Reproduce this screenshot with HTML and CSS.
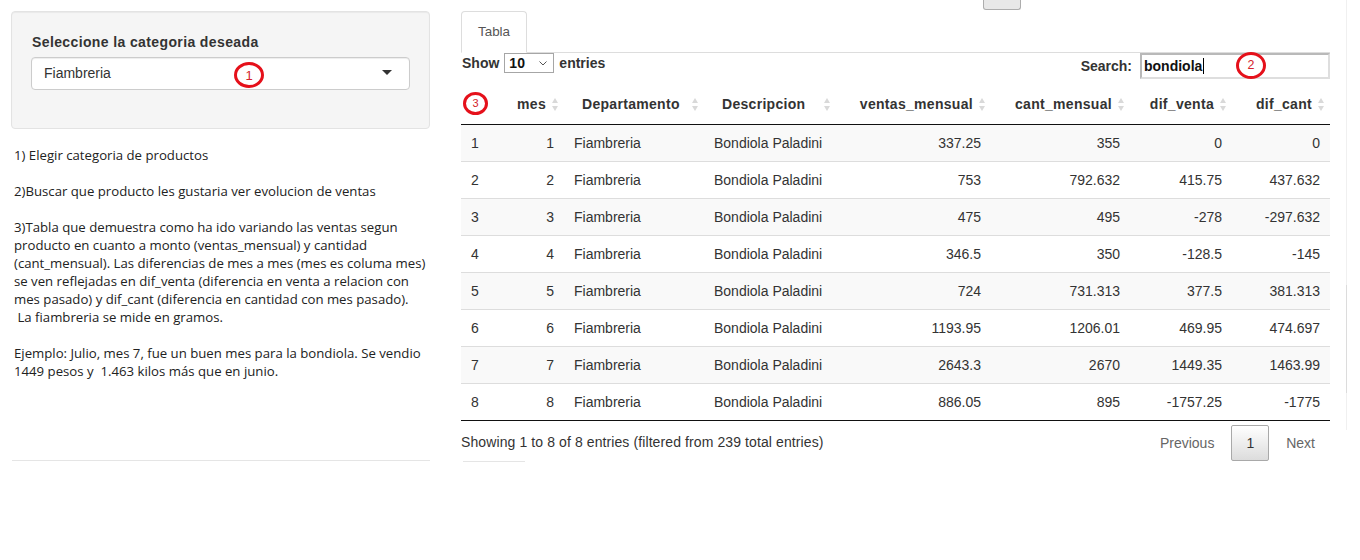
FILE: index.html
```html
<!DOCTYPE html>
<html lang="es">
<head>
<meta charset="utf-8">
<title>Tabla</title>
<link rel="stylesheet" href="styles.css">
</head>
<body>
<div class="page">
  <aside class="sidebar">
    <div class="well">
      <div class="form-group">
        <label class="ctl-label">Seleccione la categoria deseada</label>
        <div class="selectize">
          <span class="sel-value">Fiambreria</span>
          <span class="mark mark-1">1</span>
        </div>
      </div>
    </div>
    <p class="help">1) Elegir categoria de productos<br><br>2)Buscar que producto les gustaria ver evolucion de ventas<br><br>3)Tabla que demuestra como ha ido variando las ventas segun<br>producto en cuanto a monto (ventas_mensual) y cantidad<br>(cant_mensual). Las diferencias de mes a mes (mes es columa mes)<br>se ven reflejadas en dif_venta (diferencia en venta a relacion con<br>mes pasado) y dif_cant (diferencia en cantidad con mes pasado).<br>&nbsp;La fiambreria se mide en gramos.<br><br>Ejemplo: Julio, mes 7, fue un buen mes para la bondiola. Se vendio<br>1449 pesos y&nbsp; 1.463 kilos más que en junio.</p>
    <hr class="rule">
  </aside>

  <main class="main">
    <div class="stub-row"><div class="stub-btn"></div></div>
    <ul class="tabs">
      <li class="tab">Tabla</li>
    </ul>

    <div class="dt-controls">
      <div class="dt-length">
        <span>Show</span>
        <span class="len-select"><span>10</span><svg class="chev" width="8" height="5" viewBox="0 0 8 5"><path d="M0.5 0.5 L4 4 L7.5 0.5" fill="none" stroke="#555" stroke-width="1"/></svg></span>
        <span>entries</span>
      </div>
      <div class="dt-filter">
        <span>Search:</span>
        <span class="search-input">bondiola<span class="caret"></span><span class="mark mark-2">2</span></span>
      </div>
    </div>

    <table class="dt">
      <colgroup>
        <col class="c0"><col class="c1"><col class="c2"><col class="c3"><col class="c4"><col class="c5"><col class="c6"><col class="c7">
      </colgroup>
      <thead>
        <tr>
          <th><span class="mark mark-3">3</span></th>
          <th class="r s">mes</th>
          <th class="s">Departamento</th>
          <th class="s">Descripcion</th>
          <th class="r s">ventas_mensual</th>
          <th class="r s">cant_mensual</th>
          <th class="r s">dif_venta</th>
          <th class="r s">dif_cant</th>
        </tr>
      </thead>
      <tbody>
        <tr><td>1</td><td class="r">1</td><td>Fiambreria</td><td>Bondiola Paladini</td><td class="r">337.25</td><td class="r">355</td><td class="r">0</td><td class="r">0</td></tr>
        <tr><td>2</td><td class="r">2</td><td>Fiambreria</td><td>Bondiola Paladini</td><td class="r">753</td><td class="r">792.632</td><td class="r">415.75</td><td class="r">437.632</td></tr>
        <tr><td>3</td><td class="r">3</td><td>Fiambreria</td><td>Bondiola Paladini</td><td class="r">475</td><td class="r">495</td><td class="r">-278</td><td class="r">-297.632</td></tr>
        <tr><td>4</td><td class="r">4</td><td>Fiambreria</td><td>Bondiola Paladini</td><td class="r">346.5</td><td class="r">350</td><td class="r">-128.5</td><td class="r">-145</td></tr>
        <tr><td>5</td><td class="r">5</td><td>Fiambreria</td><td>Bondiola Paladini</td><td class="r">724</td><td class="r">731.313</td><td class="r">377.5</td><td class="r">381.313</td></tr>
        <tr><td>6</td><td class="r">6</td><td>Fiambreria</td><td>Bondiola Paladini</td><td class="r">1193.95</td><td class="r">1206.01</td><td class="r">469.95</td><td class="r">474.697</td></tr>
        <tr><td>7</td><td class="r">7</td><td>Fiambreria</td><td>Bondiola Paladini</td><td class="r">2643.3</td><td class="r">2670</td><td class="r">1449.35</td><td class="r">1463.99</td></tr>
        <tr><td>8</td><td class="r">8</td><td>Fiambreria</td><td>Bondiola Paladini</td><td class="r">886.05</td><td class="r">895</td><td class="r">-1757.25</td><td class="r">-1775</td></tr>
      </tbody>
    </table>

    <div class="dt-footer">
      <div class="dt-info">Showing 1 to 8 of 8 entries (filtered from 239 total entries)</div>
      <div class="dt-paginate">
        <span class="pg">Previous</span>
        <span class="pg current">1</span>
        <span class="pg">Next</span>
      </div>
    </div>
    <div class="stub-line"></div>
  </main>

  <div class="vline"><div class="vline-thumb"></div></div>
</div>
</body>
</html>
```

FILE: styles.css
```css
html, body {
  margin: 0;
  padding: 0;
  background: #fff;
}

body {
  font-family: "Liberation Sans", Arial, sans-serif;
  font-size: 14px;
  color: #333;
}

.page {
  display: flex;
  align-items: flex-start;
  padding-left: 11px;
}

/* ---------- sidebar ---------- */
.sidebar {
  width: 419px;
  flex: none;
}

.well {
  margin-top: 11px;
  padding: 20px 19px 19px;
  background: #f5f5f5;
  border: 1px solid #e3e3e3;
  border-radius: 4px;
  box-shadow: inset 0 1px 1px rgba(0, 0, 0, 0.05);
}

.form-group {
  margin-bottom: 19px;
}

.ctl-label {
  display: block;
  font-weight: bold;
  line-height: 20px;
  margin-bottom: 5px;
  margin-left: 1px;
  letter-spacing: 0.38px;
}

.selectize {
  position: relative;
  height: 33px;
  box-sizing: border-box;
  border: 1px solid #ccc;
  border-radius: 4px;
  background: #fff;
  padding: 6px 12px;
  line-height: 19px;
  box-shadow: inset 0 1px 1px rgba(0, 0, 0, 0.075);
}

.selectize::after {
  content: "";
  position: absolute;
  right: 17px;
  top: 50%;
  margin-top: -4px;
  border-style: solid;
  border-width: 5px 5px 0;
  border-color: #333 transparent transparent;
}

.help {
  margin: 17px 0 0 3px;
  font-family: "Open Sans", "Noto Sans", sans-serif;
  font-size: 13.2px;
  line-height: 18px;
  color: #222;
  white-space: nowrap;
}

.rule {
  margin: 80px 0 0 1px;
  width: 418px;
  height: 0;
  border: 0;
  border-top: 1px solid #e5e5e5;
}

/* ---------- annotation marks ---------- */
.mark {
  position: absolute;
  box-sizing: border-box;
  border: 3.5px solid #e5101a;
  border-radius: 50%;
  display: flex;
  align-items: center;
  justify-content: center;
  color: #d4232b;
  font-family: "Liberation Sans", Arial, sans-serif;
  font-weight: normal;
  letter-spacing: 0;
  line-height: 1;
}

.mark-1 {
  left: 202px;
  top: 4px;
  width: 30px;
  height: 26px;
  font-size: 13px;
}

.mark-2 {
  left: 94px;
  top: -3px;
  width: 30px;
  height: 27px;
  font-size: 12.5px;
}

.mark-3 {
  left: 2px;
  top: 7px;
  width: 25px;
  height: 23px;
  font-size: 11px;
}

/* ---------- main panel ---------- */
.main {
  width: 869px;
  margin-left: 31px;
  flex: none;
}

.stub-row {
  height: 10px;
  padding-left: 522px;
}

.stub-btn {
  width: 38px;
  height: 10px;
  box-sizing: border-box;
  border: 1px solid #adadad;
  border-top: 0;
  border-radius: 0 0 3px 3px;
  background: #e8e8e8;
}

.tabs {
  list-style: none;
  margin: 1px 0 0;
  padding: 0;
  display: flex;
  border-bottom: 1px solid #ddd;
}

.tab {
  margin-bottom: -1px;
  padding: 10px 16px;
  line-height: 20px;
  font-size: 13.4px;
  color: #555;
  background: #fff;
  border: 1px solid #ddd;
  border-bottom-color: transparent;
  border-radius: 4px 4px 0 0;
}

.dt-controls {
  display: flex;
  justify-content: space-between;
  align-items: flex-start;
  height: 26px;
}

.dt-length {
  display: flex;
  align-items: center;
  font-weight: bold;
  line-height: 20px;
  margin-left: 1px;
}

.len-select {
  display: inline-flex;
  align-items: center;
  justify-content: space-between;
  box-sizing: border-box;
  width: 50px;
  height: 20px;
  margin: 0 5px;
  padding: 0 6px 0 4px;
  border: 1px solid #a6a6a6;
  background: #fff;
  color: #111;
}

.chev {
  display: block;
}

.dt-filter {
  display: flex;
  align-items: center;
  height: 26px;
  font-weight: bold;
}

.search-input {
  position: relative;
  display: flex;
  align-items: center;
  box-sizing: border-box;
  width: 190px;
  height: 26px;
  margin-left: 8px;
  padding: 0 2px;
  border: 2px solid;
  border-color: #b9b9b9 #dedede #dedede #b9b9b9;
  color: #111;
}

.caret {
  display: inline-block;
  width: 0;
  height: 16px;
  margin-left: 1px;
  border-left: 1px solid #000;
}

/* ---------- table ---------- */
.dt {
  width: 869px;
  table-layout: fixed;
  border-collapse: separate;
  border-spacing: 0;
  margin-top: 6px;
  border-bottom: 1px solid #111;
}

.c0 { width: 38px; }
.c1 { width: 65px; }
.c2 { width: 140px; }
.c3 { width: 132px; }
.c4 { width: 155px; }
.c5 { width: 139px; }
.c6 { width: 102px; }
.c7 { width: 98px; }

.dt th {
  position: relative;
  padding: 10px 18px;
  line-height: 19px;
  font-weight: bold;
  letter-spacing: 0.3px;
  text-align: left;
  white-space: nowrap;
  border-bottom: 1px solid #111;
}

.dt td {
  padding: 8px 10px;
  line-height: 20px;
  white-space: nowrap;
  border-top: 1px solid #ddd;
}

.dt tbody tr:first-child td {
  border-top: 0;
}

.dt tbody tr:nth-child(odd) td {
  background: #f9f9f9;
}

.dt .r {
  text-align: right;
}

.dt th.s::before,
.dt th.s::after {
  content: "";
  position: absolute;
  right: 6px;
  top: 50%;
  width: 0;
  height: 0;
  border-left: 3.5px solid transparent;
  border-right: 3.5px solid transparent;
}

.dt th.s::before {
  margin-top: -7px;
  border-bottom: 5px solid #d9d9d9;
}

.dt th.s::after {
  margin-top: 1px;
  border-top: 5px solid #d9d9d9;
}

/* ---------- footer ---------- */
.dt-footer {
  display: flex;
  justify-content: space-between;
  align-items: flex-start;
}

.dt-info {
  padding-top: 10.5px;
  line-height: 20px;
  letter-spacing: 0.1px;
}

.dt-paginate {
  display: flex;
  padding-top: 3.5px;
}

.pg {
  margin-left: 2px;
  padding: 7px 14px;
  line-height: 20px;
  border: 1px solid transparent;
  border-radius: 2px;
  color: #666;
}

.pg.current {
  color: #333;
  border-color: #a9a9a9;
  background: linear-gradient(#fff, #dcdcdc);
}

.stub-line {
  width: 62px;
  height: 1px;
  margin-left: 2px;
  background: #e5e5e5;
}

/* ---------- right edge ---------- */
.vline {
  flex: none;
  width: 1px;
  height: 430px;
  margin-left: 16px;
  background: #f0f0f0;
}

.vline-thumb {
  margin-top: 285px;
  height: 108px;
  background: #dcdcdc;
}
```
